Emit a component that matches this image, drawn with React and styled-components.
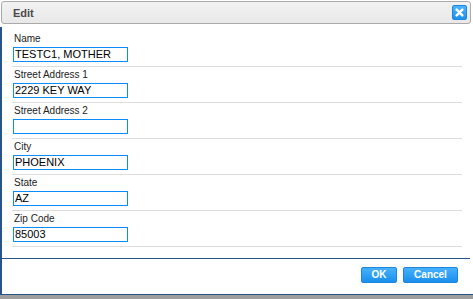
import React from "react";
import styled, { createGlobalStyle } from "styled-components";

const Global = createGlobalStyle`
  html, body { margin: 0; padding: 0; background: #9e9e9e; }
  body { font-family: "Liberation Sans", Arial, sans-serif; }
  #root { width: 473px; height: 299px; overflow: hidden; }
`;

const Dialog = styled.div`
  width: 473px;
  height: 295px;
  background: #ffffff;
  display: flex;
  flex-direction: column;
  box-sizing: border-box;
`;

const TitleBar = styled.div`
  margin: 1px 2px 0 1px;
  height: 23px;
  box-sizing: border-box;
  border: 1px solid #aaaaaa;
  border-radius: 3px;
  background: linear-gradient(#f2f2f2, #e8e8e8);
  display: flex;
  align-items: center;
  justify-content: space-between;
  padding: 0 3px 0 11px;
`;

const Title = styled.span`
  font-size: 11px;
  font-weight: bold;
  color: #4a4a4a;
`;

const CloseButton = styled.button`
  width: 15px;
  height: 15px;
  padding: 0;
  border: 1px solid #1b86dc;
  border-radius: 2px;
  background: linear-gradient(#4cb3ff, #1e90ee);
  display: flex;
  align-items: center;
  justify-content: center;
  cursor: pointer;
`;

const Body = styled.div`
  flex: 1;
  margin-top: 3px;
  border-left: 2px solid #27548a;
  border-bottom: 1px solid #27548a;
  display: flex;
  flex-direction: column;
  padding-top: 4px;
`;

const Fields = styled.div`
  margin-left: 10px;
  width: 450px;
  display: flex;
  flex-direction: column;
`;

const Row = styled.div`
  display: flex;
  flex-direction: column;
  align-items: flex-start;
  padding: 2px 0 4px 1px;
  border-bottom: 1px solid #dddddd;
`;

const Label = styled.label`
  font-size: 10px;
  line-height: 12px;
  color: #222222;
  padding-left: 1px;
`;

const InputBox = styled.div`
  margin-top: 2px;
  width: 115px;
  height: 15px;
  box-sizing: border-box;
  border: 1px solid #0a8cff;
  background: #fff;
  display: flex;
`;

const Input = styled.input`
  appearance: none;
  flex: 1;
  min-width: 0;
  border: none;
  margin: 0;
  padding: 0 1px;
  height: 13px;
  font-family: "Liberation Sans", Arial, sans-serif;
  font-size: 11px;
  line-height: 13px;
  color: #000;
  background: transparent;
  outline: none;
`;

const FooterLine = styled.div`
  margin-top: 11px;
  margin-right: 3px;
  height: 1px;
  background: #27548a;
`;

const Footer = styled.div`
  display: flex;
  justify-content: flex-end;
  gap: 6px;
  padding: 8px 15px 0 0;
`;

const Button = styled.button`
  height: 16px;
  min-width: ${(p) => p.$w}px;
  padding: 0 8px;
  border: 1px solid #1b86dc;
  border-radius: 2px;
  background: linear-gradient(#46b1ff, #1a8fec);
  color: #fff;
  font-family: "Liberation Sans", Arial, sans-serif;
  font-size: 10px;
  font-weight: bold;
  line-height: 14px;
  cursor: pointer;
`;

const fields = [
  ["Name", "TESTC1, MOTHER"],
  ["Street Address 1", "2229 KEY WAY"],
  ["Street Address 2", ""],
  ["City", "PHOENIX"],
  ["State", "AZ"],
  ["Zip Code", "85003"],
];

export default function App() {
  return (
    <>
      <Global />
      <Dialog>
        <TitleBar>
          <Title>Edit</Title>
          <CloseButton aria-label="close">
            <svg width="9" height="9" viewBox="0 0 8 8">
              <path d="M1.5 1.5 L6.5 6.5 M6.5 1.5 L1.5 6.5" stroke="#fff" strokeWidth="2.2" strokeLinecap="round" />
            </svg>
          </CloseButton>
        </TitleBar>
        <Body>
          <Fields>
            {fields.map(([label, value]) => (
              <Row key={label}>
                <Label>{label}</Label>
                <InputBox>
                  <Input defaultValue={value} />
                </InputBox>
              </Row>
            ))}
          </Fields>
          <FooterLine />
          <Footer>
            <Button $w={36}>OK</Button>
            <Button $w={55}>Cancel</Button>
          </Footer>
        </Body>
      </Dialog>
    </>
  );
}
